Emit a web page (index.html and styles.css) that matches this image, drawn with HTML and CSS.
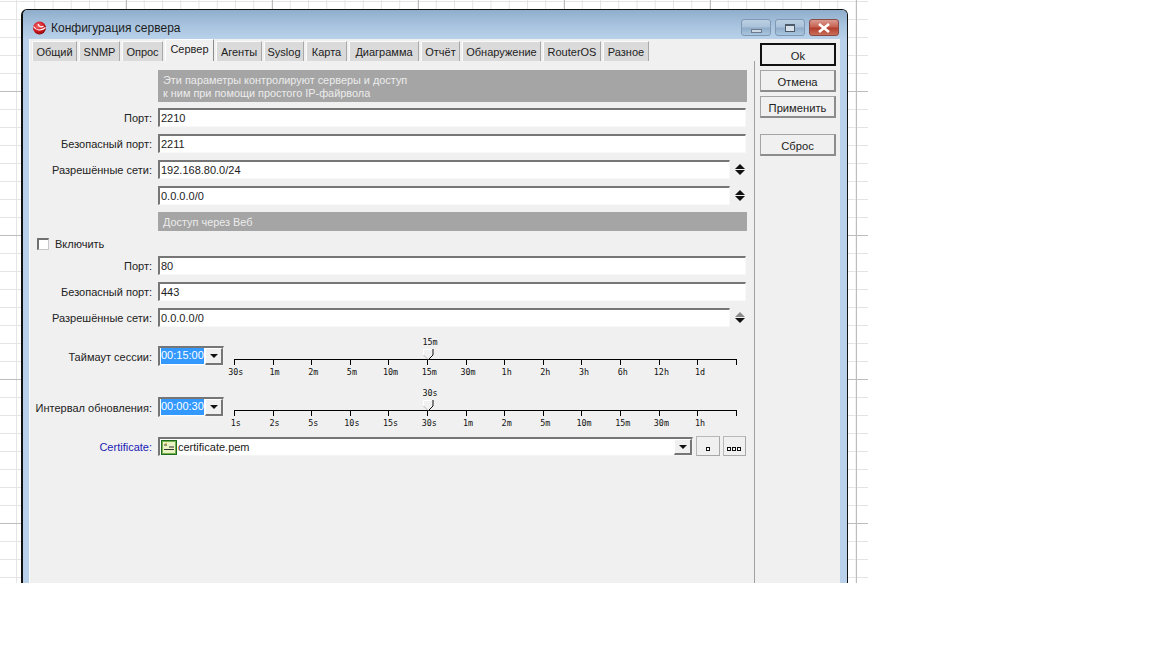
FILE: index.html
```html
<!DOCTYPE html>
<html lang="ru">
<head>
<meta charset="utf-8">
<title>Конфигурация сервера</title>
<link rel="stylesheet" href="styles.css">
</head>
<body>
<div class="sheet">
  <div class="window">
    <header class="titlebar">
      <svg class="app-icon" width="15" height="14" viewBox="0 0 15 14"><defs><radialGradient id="ball" cx="0.4" cy="0.35" r="0.75"><stop offset="0" stop-color="#f46a6a"/><stop offset="0.6" stop-color="#c8141c"/><stop offset="1" stop-color="#6a0a10"/></radialGradient></defs><circle cx="7.5" cy="7" r="6.5" fill="url(#ball)"/><path d="M1.5 5.5 C4 9.5 9 10.5 13.5 6.5 M6 3 C7 6 9.5 6.5 11.5 5" fill="none" stroke="#fff" stroke-width="1.1"/></svg>
      <span class="title">Конфигурация сервера</span>
      <div class="controls">
        <div class="ctl"><span class="glyph-min"></span></div>
        <div class="ctl"><span class="glyph-max"></span></div>
        <div class="ctl ctl-close"><svg width="16" height="10" viewBox="0 0 16 10"><path d="M3 1 L13 9 M13 1 L3 9" stroke="#fff" stroke-width="2.6"/></svg></div>
      </div>
    </header>
    <div class="client">
      <div class="main">
        <nav class="tabs">
          <div class="tab">Общий</div>
          <div class="tab">SNMP</div>
          <div class="tab">Опрос</div>
          <div class="tab tab-active">Сервер</div>
          <div class="tab">Агенты</div>
          <div class="tab">Syslog</div>
          <div class="tab">Карта</div>
          <div class="tab">Диаграмма</div>
          <div class="tab">Отчёт</div>
          <div class="tab">Обнаружение</div>
          <div class="tab">RouterOS</div>
          <div class="tab">Разное</div>
        </nav>
        <section class="panel">
          <div class="form">
            <div class="band band-tall">Эти параметры контролируют серверы и доступ<br>к ним при помощи простого IP-файрвола</div>
            <div class="row"><label class="lbl">Порт:</label><div class="field">2210</div></div>
            <div class="row"><label class="lbl">Безопасный порт:</label><div class="field">2211</div></div>
            <div class="row"><label class="lbl">Разрешённые сети:</label><div class="spin-field"><div class="field">192.168.80.0/24</div><svg class="spin" width="10" height="11" viewBox="0 0 10 11"><path d="M5 0 L10 5 H0 Z" fill="#111"/><path d="M0 6 H10 L5 11 Z" fill="#111"/></svg></div></div>
            <div class="row"><span class="lbl"></span><div class="spin-field"><div class="field">0.0.0.0/0</div><svg class="spin" width="10" height="11" viewBox="0 0 10 11"><path d="M5 0 L10 5 H0 Z" fill="#111"/><path d="M0 6 H10 L5 11 Z" fill="#111"/></svg></div></div>
            <div class="row"><span class="lbl"></span><div class="band">Доступ через Веб</div></div>
            <div class="check-row"><span class="check"></span><span>Включить</span></div>
            <div class="row"><label class="lbl">Порт:</label><div class="field">80</div></div>
            <div class="row"><label class="lbl">Безопасный порт:</label><div class="field">443</div></div>
            <div class="row"><label class="lbl">Разрешённые сети:</label><div class="spin-field"><div class="field">0.0.0.0/0</div><svg class="spin" width="10" height="11" viewBox="0 0 10 11"><path d="M5 0 L10 5 H0 Z" fill="#8a8a8a"/><path d="M0 6 H10 L5 11 Z" fill="#111"/></svg></div></div>

            <div class="slider-row">
              <label class="lbl">Таймаут сессии:</label>
              <div class="time-box"><span class="time-value"><span class="selected">00:15:00</span></span><span class="arrow-btn"><i class="arrow"></i></span></div>
              <div class="ruler">
                <div class="ruler-value ruler-value-a">15m</div>
                <svg class="thumb" width="11" height="11" viewBox="0 0 11 11"><path d="M.5 6 V.5 H9" fill="none" stroke="#fff"/><path d="M.5 6 L5 10.5" fill="none" stroke="#bbb"/><path d="M10 0 V6 L5.5 10.5" fill="none" stroke="#111"/></svg>
                <div class="ticks"><i></i><i></i><i></i><i></i><i></i><i></i><i></i><i></i><i></i><i></i><i></i><i></i><i></i></div>
                <div class="tick-labels"><span>30s</span><span>1m</span><span>2m</span><span>5m</span><span>10m</span><span>15m</span><span>30m</span><span>1h</span><span>2h</span><span>3h</span><span>6h</span><span>12h</span><span>1d</span></div>
              </div>
            </div>

            <div class="slider-row">
              <label class="lbl">Интервал обновления:</label>
              <div class="time-box"><span class="time-value"><span class="selected">00:00:30</span></span><span class="arrow-btn"><i class="arrow"></i></span></div>
              <div class="ruler">
                <div class="ruler-value ruler-value-a">30s</div>
                <svg class="thumb" width="11" height="11" viewBox="0 0 11 11"><path d="M.5 6 V.5 H9" fill="none" stroke="#fff"/><path d="M.5 6 L5 10.5" fill="none" stroke="#bbb"/><path d="M10 0 V6 L5.5 10.5" fill="none" stroke="#111"/></svg>
                <div class="ticks"><i></i><i></i><i></i><i></i><i></i><i></i><i></i><i></i><i></i><i></i><i></i><i></i><i></i></div>
                <div class="tick-labels"><span>1s</span><span>2s</span><span>5s</span><span>10s</span><span>15s</span><span>30s</span><span>1m</span><span>2m</span><span>5m</span><span>10m</span><span>15m</span><span>30m</span><span>1h</span></div>
              </div>
            </div>

            <div class="row row-cert">
              <label class="lbl lbl-link">Certificate:</label>
              <div class="cert-line">
                <div class="combo">
                  <svg class="cert-icon" width="16" height="15" viewBox="0 0 16 15"><rect x=".5" y=".5" width="15" height="14" fill="#e9f3c4" stroke="#1d6b1d"/><rect x="1.5" y="1.5" width="13" height="12" fill="none" stroke="#79b050"/><path d="M3 5 H6 M8 7 H13 M3 9.5 H13" stroke="#333" stroke-width="1"/><path d="M5 2.5 l1 2 l-2 -1 h2 l-2 1 z" fill="#c9a21a"/></svg>
                  <span class="combo-text">certificate.pem</span>
                  <span class="arrow-btn"><i class="arrow"></i></span>
                </div>
                <div class="mini-btn"><i class="dot"></i></div>
                <div class="mini-btn"><i class="dot"></i><i class="dot"></i><i class="dot"></i></div>
              </div>
            </div>
          </div>
        </section>
      </div>
      <aside class="side">
        <button class="btn btn-default">Ok</button>
        <button class="btn">Отмена</button>
        <button class="btn">Применить</button>
        <button class="btn btn-reset">Сброс</button>
      </aside>
    </div>
  </div>
</div>
</body>
</html>
```

FILE: styles.css
```css
* { box-sizing: border-box; }
html, body { margin: 0; padding: 0; background: #fff; }
body {
  width: 1152px;
  height: 648px;
  overflow: hidden;
  font-family: "Liberation Sans", Arial, sans-serif;
  font-size: 11px;
  color: #222;
}
.sheet {
  width: 868px;
  height: 583px;
  padding: 9px 20px 0 21px;
  overflow: hidden;
  background-color: #fff;
  background-image:
    linear-gradient(to right, #bdbdbd 1px, transparent 1px),
    linear-gradient(to bottom, #bdbdbd 1px, transparent 1px),
    linear-gradient(to right, #e4e4e4 1px, transparent 1px),
    linear-gradient(to bottom, #e4e4e4 1px, transparent 1px);
  background-size: 146px 100%, 100% 144px, 18.25px 100%, 100% 18px;
  background-position: 126px 0, 0 91px, 16px 0, 0 1px;
}
.window {
  width: 827px;
  height: 580px;
  display: flex;
  flex-direction: column;
  border: 1px solid #111;
  border-left-width: 2px;
  border-bottom: 0;
  border-radius: 6px 6px 0 0;
  background: #b9d1ea;
}
.titlebar {
  flex: none;
  height: 29px;
  display: flex;
  align-items: center;
  padding: 6px 8px 0 9px;
  border-radius: 5px 5px 0 0;
  background: linear-gradient(to bottom, #8fadcc 0%, #a9c4df 55%, #b9d1ea 100%);
}
.app-icon { flex: none; }
.title { margin-left: 4px; font-size: 12px; color: #1c1c1c; }
.controls { margin-left: auto; display: flex; gap: 4px; }
.ctl {
  width: 30px;
  height: 17px;
  display: flex;
  align-items: center;
  justify-content: center;
  border: 1px solid #7f98b3;
  border-radius: 3px;
  background: linear-gradient(to bottom, #bccfe2 0%, #aac2da 48%, #8fabc8 52%, #a9c6e0 100%);
}
.ctl-close {
  border-color: #8a4a44;
  background: linear-gradient(to bottom, #d99a90 0%, #c8604f 48%, #b23a2a 52%, #c9705c 100%);
}
.glyph-min {
  width: 11px;
  height: 4px;
  margin-top: 7px;
  border: 1px solid #6c7c8e;
  background: #ccd8e4;
}
.glyph-max {
  width: 10px;
  height: 8px;
  border: 1px solid #4c5a6a;
  border-top-width: 2px;
  background: #d8e2ec;
}
.client {
  flex: 1;
  min-height: 0;
  display: flex;
  margin: 0 0 0 6px;
  width: 811px;
  background: #f0f0f0;
  border-left: 1px solid #f8fbff;
}
.main { flex: none; width: 725px; display: flex; flex-direction: column; }
.tabs {
  flex: none;
  height: 22px;
  padding: 2px 0 0 2px;
  display: grid;
  grid-template-columns: 45px 41px 41px 49px 46px 40px 41px 70px 39px 79px 58px 46px;
  column-gap: 2px;
  justify-content: start;
}
.tab {
  height: 20px;
  display: flex;
  align-items: center;
  justify-content: center;
  background: #dadada;
  border-top: 1px solid #fafafa;
  border-left: 1px solid #fafafa;
  border-right: 1px solid #a8a8a8;
  font-size: 11px;
  color: #222;
}
.tab-active {
  height: 22px;
  margin-top: -2px;
  padding-bottom: 3px;
  background: #f0f0f0;
  border-top-color: #fff;
  border-left-color: #fff;
  border-right-color: #8c8c8c;
}
.panel {
  flex: 1;
  min-height: 0;
  padding: 9px 7px 0 0;
  border-right: 1px solid #a0a0a0;
}
.form { display: flex; flex-direction: column; gap: 7px; }
.band {
  height: 19px;
  display: flex;
  align-items: center;
  padding-left: 5px;
  width: 589px;
  background: #a5a5a5;
  color: #ececec;
  font-size: 10.9px;
}
.band-tall {
  display: block;
  width: 589px;
  height: 32px;
  margin-left: 128px;
  margin-bottom: -1px;
  padding: 4px 0 0 5px;
  line-height: 13px;
}
.row { height: 19px; display: flex; }
.lbl {
  flex: none;
  width: 122px;
  margin-right: 6px;
  height: 19px;
  padding-top: 1px;
  line-height: 19px;
  text-align: right;
  white-space: nowrap;
  color: #222;
}
.lbl-link { color: #1c1cb4; }
.field {
  flex: none;
  width: 588px;
  height: 19px;
  padding: 0 0 0 1px;
  line-height: 16px;
  background: #fff;
  border-style: solid;
  border-width: 2px 1px 1px 2px;
  border-color: #767676 #f8f8f8 #f8f8f8 #767676;
  font-size: 11px;
  color: #222;
}
.spin-field { width: 589px; display: flex; align-items: center; }
.spin-field .field { flex: none; width: 572px; }
.spin { flex: none; margin-left: 5px; }
.check-row {
  height: 11px;
  display: flex;
  align-items: center;
  padding-left: 7px;
  gap: 6px;
}
.check {
  flex: none;
  width: 12px;
  height: 12px;
  margin-top: 1px;
  background: #fff;
  border-style: solid;
  border-width: 2px 1px 1px 2px;
  border-color: #707070 #c8c8c8 #c8c8c8 #707070;
}
.slider-row { height: 42px; margin-top: 2px; display: flex; align-items: flex-start; }
.slider-row .lbl { margin-top: 11px; }
.time-box {
  flex: none;
  width: 66px;
  height: 20px;
  margin-top: 10px;
  display: flex;
  background: #fff;
  border-style: solid;
  border-width: 2px 1px 1px 2px;
  border-color: #767676 #f4f4f4 #f4f4f4 #767676;
}
.time-value { flex: 1; padding: 0 0 0 1px; font-size: 11px; line-height: 15px; }
.selected { display: inline-block; background: #3399ff; color: #fff; padding: 0; height: 16px; }
.arrow-btn {
  flex: none;
  width: 18px;
  height: 100%;
  display: flex;
  align-items: center;
  justify-content: center;
  background: #f0f0f0;
  border-style: solid;
  border-width: 1px 2px 2px 1px;
  border-color: #fff #767676 #767676 #fff;
}
.arrow { width: 0; height: 0; border-left: 4px solid transparent; border-right: 4px solid transparent; border-top: 4px solid #111; }
.ruler {
  position: relative;
  flex: none;
  width: 503px;
  height: 42px;
  margin-left: 10px;
  padding-top: 23px;
  font-family: "DejaVu Sans Mono", monospace;
  font-size: 8.4px;
  color: #111;
}
.ruler-value { position: absolute; top: 1px; width: 30px; text-align: center; }
.ruler-value-a { left: 181px; }
.thumb { position: absolute; top: 13px; left: 189px; }
.ticks {
  height: 6px;
  display: flex;
  border-top: 1px solid #000;
  border-right: 1px solid #000;
}
.ticks i { flex: 1; border-left: 1px solid #000; }
.tick-labels {
  display: flex;
  width: 503px;
  margin-left: -17.5px;
  margin-top: 2px;
  line-height: 10px;
}
.tick-labels span { flex: 0 0 38.69px; text-align: center; }
.row-cert { height: 20px; }
.row-cert .lbl { margin-top: 1px; }
.cert-line { display: flex; width: 588px; gap: 3px; }
.combo {
  flex: none;
  width: 535px;
  height: 19px;
  margin-top: 1px;
  display: flex;
  align-items: center;
  background: #fff;
  border-style: solid;
  border-width: 2px 1px 1px 2px;
  border-color: #767676 #f4f4f4 #f4f4f4 #767676;
  padding-left: 1px;
}
.cert-icon { flex: none; }
.combo-text { flex: 1; margin-left: 1px; font-size: 11px; color: #222; }
.mini-btn {
  flex: 1;
  height: 20px;
  display: flex;
  align-items: flex-end;
  justify-content: center;
  gap: 1px;
  padding-bottom: 4px;
  background: #f0f0f0;
  border: 1px solid #a8a8a8;
  border-top-color: #b8b8b8;
  border-left-color: #b8b8b8;
}
.dot { width: 4px; height: 4px; border: 1px solid #111; background: #fff; }
.side {
  flex: 1;
  display: flex;
  flex-direction: column;
  gap: 4px;
  padding: 4px 4px 0 5px;
}
.btn {
  width: 76px;
  height: 22px;
  padding: 2px 0 0;
  font: inherit;
  font-size: 11.2px;
  color: #222;
  background: #f0f0f0;
  border-style: solid;
  border-width: 1px 2px 2px 1px;
  border-color: #a4a4a4 #8c8c8c #8c8c8c #a4a4a4;
  border-radius: 0;
}
.btn-default { height: 23px; border: 2px solid #111; }
.btn-reset { margin-top: 12px; }
```
